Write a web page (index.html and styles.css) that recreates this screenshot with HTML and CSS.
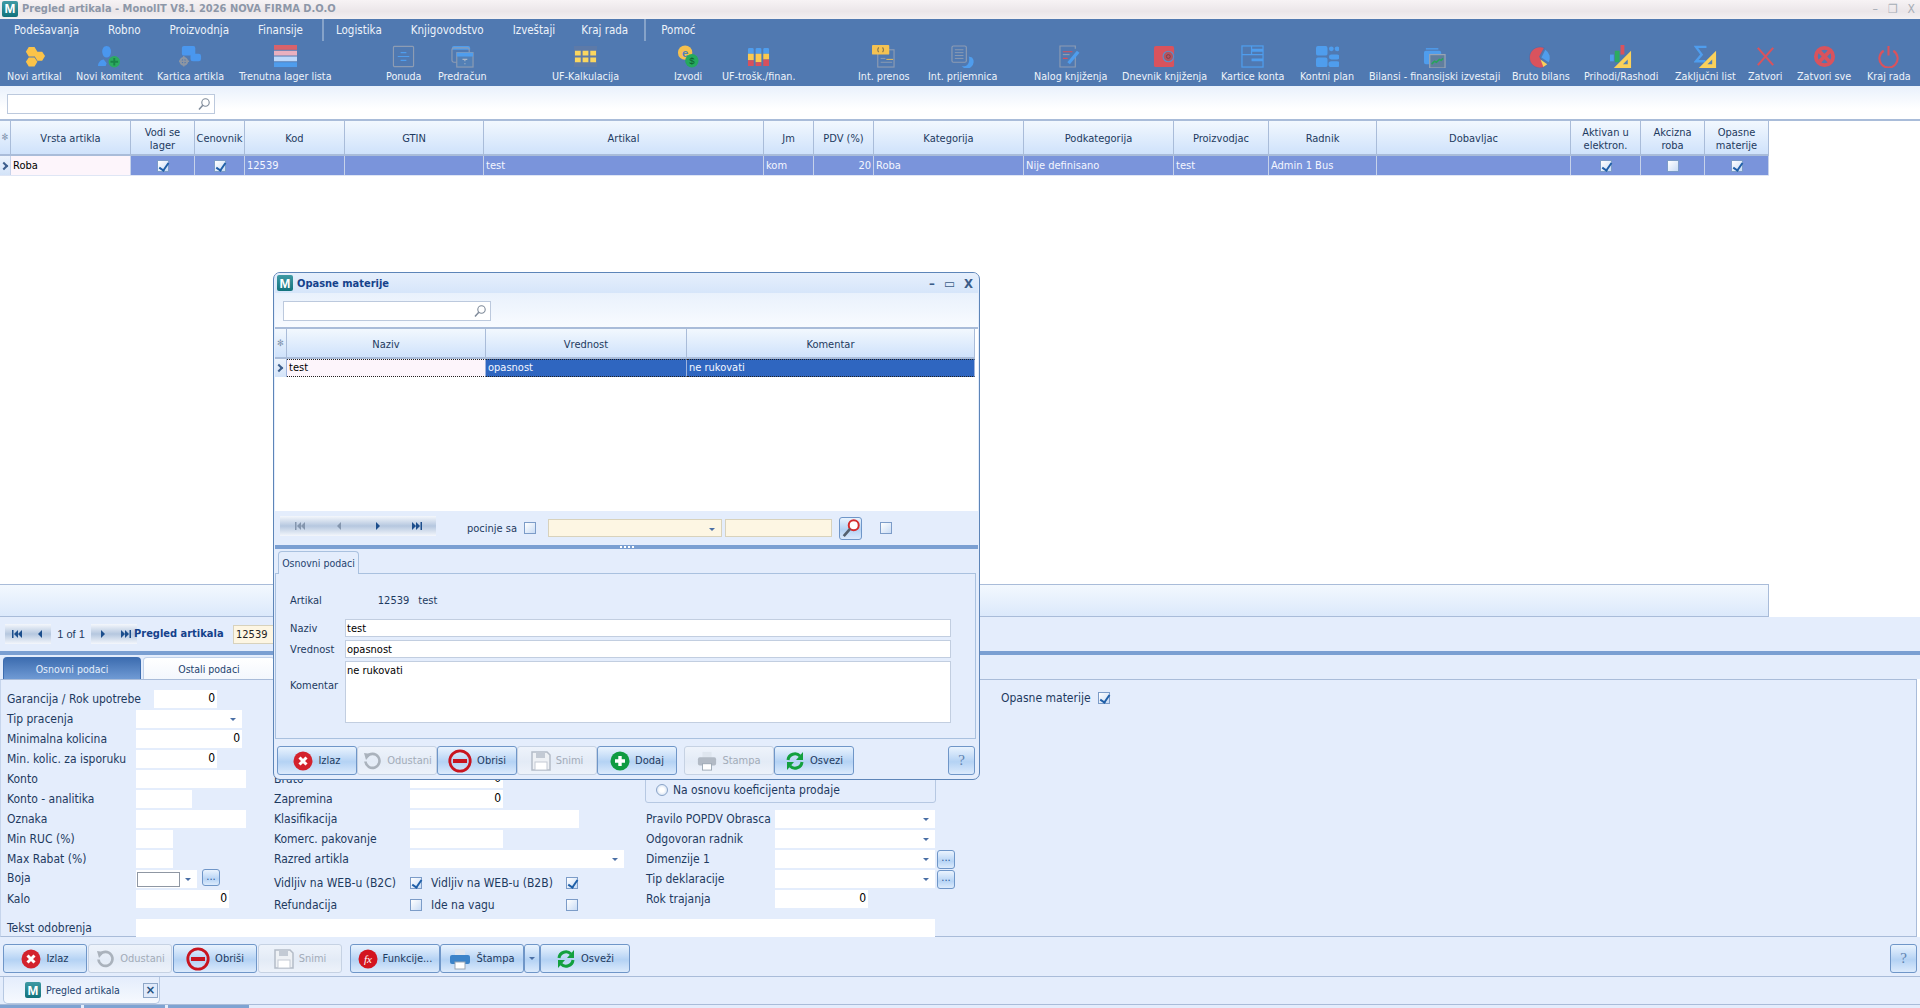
FILE: index.html
```html
<!DOCTYPE html>
<html lang="en">
<head>
  <meta charset="UTF-8" />
  <title>Pregled artikala - MonolIT</title>
  <link rel="stylesheet" href="styles.css">
</head>
<body>

<!-- Icon sprite -->
<svg class="sprite" width="0" height="0">
  <symbol id="i-hex" viewBox="0 0 24 24">
    <path fill="#fbc349" d="M6 2h6l3 5-3 5H6L3 7z M15 7h5l3 4.500-3 5h-5l-3-5z M6 13h6l3 4.500-3 5H6l-3-5z"/>
  </symbol>
  <symbol id="i-person" viewBox="0 0 24 24">
    <path fill="#4a97ee" d="M9 1c3 0 5 3 4.500 7-.4 3-2 5-4.500 5S5 11 4.500 8C4 4 6 1 9 1z M0 22c0-4 3-7 6-7l3 4-1 3z"/>
    <circle cx="17" cy="17.500" r="6" fill="#2cab60"/>
    <path stroke="#1a8548" stroke-width="2" d="M17 13.500v8M13 17.500h8"/>
  </symbol>
  <symbol id="i-chat" viewBox="0 0 24 24">
    <rect x="3" y="1" width="14" height="10" rx="2" fill="#4a97ee"/>
    <rect x="12" y="9" width="11" height="8" rx="2.500" fill="#4a97ee"/>
    <circle cx="5" cy="17" r="3.500" fill="none" stroke="#8d96a3" stroke-width="2.200"/>
    <path stroke="#8d96a3" stroke-width="1.500" d="M5 11.500v11M-.5 17h11"/>
  </symbol>
  <symbol id="i-stripes" viewBox="0 0 24 24">
    <rect y="0" width="24" height="5" fill="#d8626b"/>
    <rect y="6" width="24" height="5" fill="#e9b0bf"/>
    <rect y="12" width="24" height="5" fill="#bdd8fa"/>
    <rect y="18" width="24" height="5" fill="#4f9ded"/>
  </symbol>
  <symbol id="i-doc" viewBox="0 0 24 24">
    <rect x="1.500" y="1.500" width="21" height="21" rx="1" fill="none" stroke="#8d9cb3" stroke-width="1.200"/>
    <path stroke="#4f9ded" stroke-width="1.300" d="M9 8h6M6 12h12M9 16h6"/>
  </symbol>
  <symbol id="i-wins" viewBox="0 0 24 24">
    <path fill="#4f9ded" d="M1 3a2 2 0 0 1 2-2h15a2 2 0 0 1 2 2v2H1z"/>
    <rect x="1" y="3" width="18" height="15" rx="2" fill="none" stroke="#8d9cb3" stroke-width="1.200"/>
    <rect x="6" y="8" width="17" height="15" fill="#5380b6" stroke="#8d9cb3" stroke-width="1.200"/>
    <rect x="6" y="8" width="17" height="4" fill="#4f9ded"/>
    <path stroke="#aab6c8" stroke-width="1.200" d="M12 15h5M14.500 15v2M14.500 19v1"/>
  </symbol>
  <symbol id="i-blocks" viewBox="0 0 24 24">
    <rect x="0" y="1" width="24" height="22" fill="#5d7aa8"/>
    <path fill="#fbd65f" d="M1 6h6v5H1zM9 6h6v5H9zM17 6h6v5h-6zM1 13h6v5H1zM9 13h6v5H9zM17 13h6v5h-6z"/>
  </symbol>
  <symbol id="i-coins" viewBox="0 0 24 24">
    <circle cx="8.500" cy="8" r="7.500" fill="#f5c04e"/>
    <text x="8.500" y="12" font-size="12" font-weight="700" text-anchor="middle" fill="#5380b6" font-family="Liberation Sans">e</text>
    <circle cx="15.500" cy="16.500" r="7" fill="#25a95e"/>
    <text x="15.500" y="20" font-size="10" text-anchor="middle" fill="#0d5c2f" font-family="Liberation Sans">$</text>
  </symbol>
  <symbol id="i-cols" viewBox="0 0 24 24">
    <path fill="#4f9ded" d="M1 4l1-1h4l1 1v5H1zM9 4l1-1h4l1 1v5H9zM17 4l1-1h4l1 1v5h-6z"/>
    <path fill="#fbc94f" d="M1 9h6v7H1zM9 9h6v9H9zM17 9h6v6h-6z"/>
    <path fill="#d8505c" d="M1 16h6v6H1zM9 18h6v4H9zM17 15h6v7h-6z"/>
  </symbol>
  <symbol id="i-transfer" viewBox="0 0 24 24">
    <rect x="6" y="5" width="17" height="18" fill="none" stroke="#8d9cb3" stroke-width="1.200"/>
    <rect x="0" y="0" width="18" height="10" rx="1" fill="#f4c252"/>
    <path stroke="#8a7a50" stroke-width="1.200" fill="none" d="M7 2.500Q5 5 7 7.500M11 2.500Q13 5 11 7.500"/>
    <path stroke="#8d9cb3" d="M9 14h5M9 18h12"/>
    <path stroke="#f4c252" d="M15 15h7"/>
  </symbol>
  <symbol id="i-receipt" viewBox="0 0 24 24">
    <rect x="1" y="1" width="15" height="17" rx="1.500" fill="none" stroke="#8d9cb3" stroke-width="1.200"/>
    <path stroke="#8d9cb3" d="M4 5h9M4 8h9M4 11h9M4 14h9"/>
    <path fill="#4f9ded" d="M22 13a7 7 0 0 1-11 9c4 1 8-1 8-7 0-1 0-2-.5-3z"/>
  </symbol>
  <symbol id="i-journal" viewBox="0 0 24 24">
    <path fill="none" stroke="#8d9cb3" stroke-width="1.200" d="M17 9v14H1V1h16v3"/>
    <path stroke="#d8505c" stroke-width="1.200" d="M4 7h10M4 14h5"/>
    <path stroke="#8d9cb3" stroke-width="1.200" d="M4 10h7"/>
    <path stroke="#4f9ded" stroke-width="3.500" d="M10 19L20 7"/>
  </symbol>
  <symbol id="i-wallet" viewBox="0 0 24 24">
    <path fill="#d9535d" d="M3 1h17a2 2 0 0 1 2 2v18a2 2 0 0 1-2 2H3a2 2 0 0 1-2-2V3a2 2 0 0 1 2-2z"/>
    <circle cx="16" cy="12" r="5.500" fill="#b4545f" stroke="#5a90cc" stroke-width="1.200"/>
    <circle cx="16" cy="12" r="2" fill="none" stroke="#7d3c45"/>
  </symbol>
  <symbol id="i-cards" viewBox="0 0 24 24">
    <rect x="1" y="1" width="22" height="22" fill="none" stroke="#4f9ded" stroke-width="1.300"/>
    <path fill="#4f9ded" d="M11 4h12v3H11zM11 14h12v3H11z"/>
    <path stroke="#4f9ded" stroke-width="1.300" d="M1 10h22M11 1v9"/>
  </symbol>
  <symbol id="i-plan" viewBox="0 0 24 24">
    <path fill="#4f9ded" d="M2 1h8a2 2 0 0 1 2 2v6a2 2 0 0 1-2 2H2a2 2 0 0 1-2-2V3a2 2 0 0 1 2-2z M2 13h8a2 2 0 0 1 2 2v6a2 2 0 0 1-2 2H2a2 2 0 0 1-2-2v-6a2 2 0 0 1 2-2z M16 10h6a2 2 0 0 1 0 5h-6a2 2 0 0 1 0-5z M16 17h6a2 2 0 0 1 0 6h-6a2 2 0 0 1 0-6z"/>
    <circle cx="16" cy="4" r="2.500" fill="#4f9ded"/>
    <circle cx="22" cy="4" r="2.500" fill="#4f9ded"/>
  </symbol>
  <symbol id="i-balance" viewBox="0 0 24 24">
    <path fill="none" stroke="#4f9ded" stroke-width="1.500" d="M3 4h13"/>
    <path fill="#4f9ded" d="M1 8a2 2 0 0 1 2-2h14a2 2 0 0 1 2 2v2H7v10H3a2 2 0 0 1-2-2z"/>
    <rect x="7" y="10" width="16" height="14" fill="#607e9e" stroke="#98a4b4" stroke-width="1.300"/>
    <path fill="none" stroke="#28a45c" stroke-width="1.600" d="M9 20l3-3 2 1 3-3 2 1 2-2"/>
  </symbol>
  <symbol id="i-pie" viewBox="0 0 24 24">
    <path fill="#d9535d" stroke="#3d6fb0" stroke-width=".600" d="M12 2a11 11 0 1 0 4 21l-5-11L16 3a11 11 0 0 0-4-1z"/>
    <path fill="#4f9ded" d="M17 5a10 10 0 0 1 3.500 13L13 13z"/>
    <path fill="#fbd15a" d="M12 15l7 5-4 3z"/>
  </symbol>
  <symbol id="i-profit" viewBox="0 0 24 24">
    <rect x="0" y="10" width="4" height="7" fill="#4f9ded"/>
    <rect x="5" y="6" width="5" height="12" fill="#2cab60"/>
    <rect x="11" y="0" width="4" height="10" fill="#d9535d"/>
    <path fill="#fbd15a" d="M22 6v18H4z"/>
    <path fill="#5380b6" d="M18.500 15v5h-5z"/>
  </symbol>
  <symbol id="i-sigma" viewBox="0 0 24 24">
    <path fill="none" stroke="#4f9ded" stroke-width="2.500" d="M13 2H2l6 8-6 7h10"/>
    <path fill="#fbd15a" d="M23 6v18H5z"/>
    <path fill="#5380b6" d="M19 15v5h-5z"/>
  </symbol>
  <symbol id="i-x" viewBox="0 0 24 24">
    <path stroke="#d9535d" stroke-width="2.200" d="M4 3l16 18M20 3L4 21"/>
  </symbol>
  <symbol id="i-xall" viewBox="0 0 24 24">
    <circle cx="12" cy="12" r="9" fill="none" stroke="#d9535d" stroke-width="4"/>
    <path stroke="#d9535d" stroke-width="4" d="M7 7l10 10M17 7L7 17"/>
  </symbol>
  <symbol id="i-power" viewBox="0 0 24 24">
    <path fill="none" stroke="#d9535d" stroke-width="2.200" d="M7 6a9.500 9.500 0 1 0 10 0M12 1v10"/>
  </symbol>
  <symbol id="i-izlaz" viewBox="0 0 20 20">
    <circle cx="10" cy="10" r="9.500" fill="#d3222d"/>
    <path stroke="#fff" stroke-width="3" d="M6.500 6.500l7 7M13.500 6.500l-7 7"/>
  </symbol>
  <symbol id="i-undo" viewBox="0 0 20 20">
    <path fill="none" stroke="#aab2bc" stroke-width="2.600" d="M5 5.500a7 7 0 1 1-1.500 5"/>
    <path fill="#aab2bc" d="M2 2l7 1-5 6z"/>
  </symbol>
  <symbol id="i-minus" viewBox="0 0 24 24">
    <circle cx="12" cy="12" r="10.200" fill="none" stroke="#c8141f" stroke-width="2.800"/>
    <rect x="5" y="10" width="14" height="4" fill="#c8141f"/>
  </symbol>
  <symbol id="i-save" viewBox="0 0 20 20">
    <path fill="#eef1f5" stroke="#b4bcc7" stroke-width="1.500" d="M1 1h15l3 3v15H1z"/>
    <rect x="5" y="1" width="9" height="6" fill="#c3cad4"/>
    <rect x="4" y="11" width="12" height="8" fill="#fff" stroke="#c3cad4"/>
  </symbol>
  <symbol id="i-plus" viewBox="0 0 20 20">
    <circle cx="10" cy="10" r="9.500" fill="#0f9b41"/>
    <path stroke="#fff" stroke-width="3.400" d="M10 5v10M5 10h10"/>
  </symbol>
  <symbol id="i-print" viewBox="0 0 22 22">
    <rect x="6" y="1" width="10" height="7" fill="#dfe6ef"/>
    <rect x="1" y="7" width="20" height="9" rx="2" fill="currentColor"/>
    <rect x="6" y="14" width="10" height="7" fill="#fff" stroke="#9aa6b3"/>
  </symbol>
  <symbol id="i-refresh" viewBox="0 0 20 20">
    <path fill="none" stroke="#12a03e" stroke-width="3" d="M3 9a7 7 0 0 1 12-4M17 11a7 7 0 0 1-12 4"/>
    <path fill="#12a03e" d="M18 1v8h-7zM2 19v-8h7z"/>
  </symbol>
  <symbol id="i-fx" viewBox="0 0 20 20">
    <circle cx="10" cy="10" r="9.500" fill="#d3141f"/>
    <text x="10" y="14" font-size="11" font-style="italic" text-anchor="middle" fill="#fff" font-family="Liberation Serif">fx</text>
  </symbol>
  <symbol id="i-zoom" viewBox="0 0 14 14">
    <circle cx="8.500" cy="5.500" r="3.700" fill="none" stroke="#7e8a99" stroke-width="1.100"/>
    <path stroke="#7e8a99" stroke-width="1.500" d="M5.800 8.200L2 12.500"/>
  </symbol>
  <symbol id="i-first" viewBox="0 0 12 10"><path fill="currentColor" d="M1 1h1.500v8H1zM7 1v8L3 5zM11 1v8L7 5z"/></symbol>
  <symbol id="i-prev" viewBox="0 0 12 10"><path fill="currentColor" d="M8 1v8L4 5z"/></symbol>
  <symbol id="i-next" viewBox="0 0 12 10"><path fill="currentColor" d="M4 1v8l4-4z"/></symbol>
  <symbol id="i-last" viewBox="0 0 12 10"><path fill="currentColor" d="M1 1v8l4-4zM5 1v8l4-4zM9.500 1H11v8H9.500z"/></symbol>
</svg>

<div class="app">

  <div class="titlebar">
    <span class="logo">M</span>
    <span class="title-text">Pregled artikala - MonolIT V8.1 2026 NOVA FIRMA D.O.O</span>
    <span class="win-ctrl"><i>–</i><i>❐</i><i>X</i></span>
  </div>

  <div class="menubar">
    <span class="menu-item">Podešavanja</span>
    <span class="menu-item">Robno</span>
    <span class="menu-item">Proizvodnja</span>
    <span class="menu-item">Finansije</span>
    <span class="menu-sep"></span>
    <span class="menu-item">Logistika</span>
    <span class="menu-item">Knjigovodstvo</span>
    <span class="menu-item tight">Izveštaji</span>
    <span class="menu-item tight">Kraj rada</span>
    <span class="menu-sep"></span>
    <span class="menu-item">Pomoć</span>
  </div>

  <div class="toolbar">
    <div class="tool"><svg class="tool-ico"><use href="#i-hex"/></svg><span>Novi artikal</span></div>
    <div class="tool"><svg class="tool-ico"><use href="#i-person"/></svg><span>Novi komitent</span></div>
    <div class="tool"><svg class="tool-ico"><use href="#i-chat"/></svg><span>Kartica artikla</span></div>
    <div class="tool"><svg class="tool-ico"><use href="#i-stripes"/></svg><span>Trenutna lager lista</span></div>
    <div class="tool"><svg class="tool-ico"><use href="#i-doc"/></svg><span>Ponuda</span></div>
    <div class="tool"><svg class="tool-ico"><use href="#i-wins"/></svg><span>Predračun</span></div>
    <div class="tool"><svg class="tool-ico"><use href="#i-blocks"/></svg><span>UF-Kalkulacija</span></div>
    <div class="tool"><svg class="tool-ico"><use href="#i-coins"/></svg><span>Izvodi</span></div>
    <div class="tool"><svg class="tool-ico"><use href="#i-cols"/></svg><span>UF-trošk./finan.</span></div>
    <div class="tool"><svg class="tool-ico"><use href="#i-transfer"/></svg><span>Int. prenos</span></div>
    <div class="tool"><svg class="tool-ico"><use href="#i-receipt"/></svg><span>Int. prijemnica</span></div>
    <div class="tool"><svg class="tool-ico"><use href="#i-journal"/></svg><span>Nalog knjiženja</span></div>
    <div class="tool"><svg class="tool-ico"><use href="#i-wallet"/></svg><span>Dnevnik knjiženja</span></div>
    <div class="tool"><svg class="tool-ico"><use href="#i-cards"/></svg><span>Kartice konta</span></div>
    <div class="tool"><svg class="tool-ico"><use href="#i-plan"/></svg><span>Kontni plan</span></div>
    <div class="tool"><svg class="tool-ico"><use href="#i-balance"/></svg><span>Bilansi - finansijski izvestaji</span></div>
    <div class="tool"><svg class="tool-ico"><use href="#i-pie"/></svg><span>Bruto bilans</span></div>
    <div class="tool"><svg class="tool-ico"><use href="#i-profit"/></svg><span>Prihodi/Rashodi</span></div>
    <div class="tool"><svg class="tool-ico"><use href="#i-sigma"/></svg><span>Zaključni list</span></div>
    <div class="tool"><svg class="tool-ico"><use href="#i-x"/></svg><span>Zatvori</span></div>
    <div class="tool"><svg class="tool-ico"><use href="#i-xall"/></svg><span>Zatvori sve</span></div>
    <div class="tool"><svg class="tool-ico"><use href="#i-power"/></svg><span>Kraj rada</span></div>
  </div>

  <div class="searchbar">
    <div class="searchbox"><svg class="zoom-ico"><use href="#i-zoom"/></svg></div>
  </div>

  <!-- Article list -->
  <div class="grid-head art-cols">
    <div class="hcell star">✻</div>
    <div class="hcell">Vrsta artikla</div>
    <div class="hcell">Vodi se lager</div>
    <div class="hcell">Cenovnik</div>
    <div class="hcell">Kod</div>
    <div class="hcell">GTIN</div>
    <div class="hcell">Artikal</div>
    <div class="hcell">Jm</div>
    <div class="hcell">PDV (%)</div>
    <div class="hcell">Kategorija</div>
    <div class="hcell">Podkategorija</div>
    <div class="hcell">Proizvodjac</div>
    <div class="hcell">Radnik</div>
    <div class="hcell">Dobavljac</div>
    <div class="hcell">Aktivan u elektron.</div>
    <div class="hcell">Akcizna roba</div>
    <div class="hcell">Opasne materije</div>
  </div>
  <div class="grid-row art-cols art-row">
    <div class="cell marker"><span class="chev"></span></div>
    <div class="cell first">Roba</div>
    <div class="cell mid"><span class="chk on"></span></div>
    <div class="cell mid"><span class="chk on"></span></div>
    <div class="cell">12539</div>
    <div class="cell"></div>
    <div class="cell">test</div>
    <div class="cell">kom</div>
    <div class="cell right">20</div>
    <div class="cell">Roba</div>
    <div class="cell">Nije definisano</div>
    <div class="cell">test</div>
    <div class="cell">Admin 1 Bus</div>
    <div class="cell"></div>
    <div class="cell mid"><span class="chk on"></span></div>
    <div class="cell mid"><span class="chk"></span></div>
    <div class="cell mid"><span class="chk on"></span></div>
  </div>
  <div class="grid-space"></div>
  <div class="summary"></div>

  <!-- Record navigator -->
  <div class="navrow">
    <div class="navband">
      <svg class="nav-ico"><use href="#i-first"/></svg>
      <svg class="nav-ico"><use href="#i-prev"/></svg>
    </div>
    <span class="nav-count">1 of 1</span>
    <div class="navband">
      <svg class="nav-ico"><use href="#i-next"/></svg>
      <svg class="nav-ico"><use href="#i-last"/></svg>
    </div>
    <b class="nav-title">Pregled artikala</b>
    <span class="nav-code">12539</span>
  </div>
  <div class="splitter"></div>

  <div class="tabs">
    <span class="tab tab-on">Osnovni podaci</span>
    <span class="tab tab-next">Ostali podaci</span>
  </div>

  <div class="panel">
    <div class="form-cols">
      <div class="col-a">
        <div class="row"><span class="lbl lbl-wide">Garancija / Rok upotrebe</span><span class="fld num w63">0</span></div>
        <div class="row"><span class="lbl">Tip pracenja</span><span class="fld drop w106"><i class="arrow"></i></span></div>
        <div class="row"><span class="lbl">Minimalna kolicina</span><span class="fld num w106">0</span></div>
        <div class="row"><span class="lbl">Min. kolic. za isporuku</span><span class="fld num w81">0</span></div>
        <div class="row"><span class="lbl">Konto</span><span class="fld w110"></span></div>
        <div class="row"><span class="lbl">Konto - analitika</span><span class="fld w56"></span></div>
        <div class="row"><span class="lbl">Oznaka</span><span class="fld w110"></span></div>
        <div class="row"><span class="lbl">Min RUC (%)</span><span class="fld w37"></span></div>
        <div class="row"><span class="lbl">Max Rabat (%)</span><span class="fld w37"></span></div>
        <div class="row"><span class="lbl lbl-up">Boja</span><span class="fld drop w61"><i class="swatch"></i><i class="arrow"></i></span><span class="dots">...</span></div>
        <div class="row"><span class="lbl">Kalo</span><span class="fld num w93">0</span></div>
      </div>
      <div class="col-b">
        <div class="row"><span class="lbl lbl-b">Bruto</span><span class="fld num w93">0</span></div>
        <div class="row"><span class="lbl lbl-b">Zapremina</span><span class="fld num w93">0</span></div>
        <div class="row"><span class="lbl lbl-b">Klasifikacija</span><span class="fld w169"></span></div>
        <div class="row"><span class="lbl lbl-b">Komerc. pakovanje</span><span class="fld w93"></span></div>
        <div class="row"><span class="lbl lbl-b">Razred artikla</span><span class="fld drop w214"><i class="arrow"></i></span></div>
        <div class="row row-chk row-web"><span class="lbl lbl-b">Vidljiv na WEB-u (B2C)</span><span class="chk on"></span><span class="lbl lbl-b2">Vidljiv na WEB-u (B2B)</span><span class="chk on"></span></div>
        <div class="row row-chk"><span class="lbl lbl-b">Refundacija</span><span class="chk"></span><span class="lbl lbl-b2">Ide na vagu</span><span class="chk"></span></div>
      </div>
      <div class="col-c">
        <div class="groupbox"><span class="radio"></span><span class="lbl">Na osnovu koeficijenta prodaje</span></div>
        <div class="row"><span class="lbl lbl-c">Pravilo POPDV Obrasca</span><span class="fld drop w160"><i class="arrow"></i></span></div>
        <div class="row"><span class="lbl lbl-c">Odgovoran radnik</span><span class="fld drop w160"><i class="arrow"></i></span></div>
        <div class="row"><span class="lbl lbl-c">Dimenzije 1</span><span class="fld drop w160"><i class="arrow"></i></span><span class="dots dots-c">...</span></div>
        <div class="row"><span class="lbl lbl-c">Tip deklaracije</span><span class="fld drop w160"><i class="arrow"></i></span><span class="dots dots-c">...</span></div>
        <div class="row"><span class="lbl lbl-c">Rok trajanja</span><span class="fld num w93">0</span></div>
      </div>
      <div class="col-d">
        <span class="lbl">Opasne materije</span><span class="chk on"></span>
      </div>
    </div>
    <div class="wide-row"><span class="lbl">Tekst odobrenja</span><span class="fld w-wide"></span></div>
  </div>

  <div class="actionbar">
    <button class="btn b84"><svg class="btn-ico"><use href="#i-izlaz"/></svg>Izlaz</button>
    <button class="btn b84 off"><svg class="btn-ico"><use href="#i-undo"/></svg>Odustani</button>
    <button class="btn b84"><svg class="btn-ico big"><use href="#i-minus"/></svg>Obriši</button>
    <button class="btn b84 off"><svg class="btn-ico"><use href="#i-save"/></svg>Snimi</button>
    <button class="btn b90 gap-l"><svg class="btn-ico"><use href="#i-fx"/></svg>Funkcije...</button>
    <button class="btn b84 print joined"><svg class="btn-ico"><use href="#i-print"/></svg>Štampa</button>
    <button class="btn b16 joined"><i class="arrow"></i></button>
    <button class="btn b90 joined"><svg class="btn-ico"><use href="#i-refresh"/></svg>Osveži</button>
    <button class="btn help push">?</button>
  </div>

  <div class="tabstrip">
    <div class="doc-tab">
      <span class="logo">M</span>
      <span class="doc-name">Pregled artikala</span>
      <span class="doc-close">×</span>
    </div>
  </div>
  <div class="task-edge"></div>

  <!-- Opasne materije window -->
  <div class="dialog">
    <div class="dlg-title">
      <span class="logo">M</span>
      <span class="dlg-name">Opasne materije</span>
      <span class="dlg-ctrl"><i>–</i><i>▭</i><i>X</i></span>
    </div>
    <div class="dlg-search">
      <div class="searchbox"><svg class="zoom-ico"><use href="#i-zoom"/></svg></div>
    </div>
    <div class="dlg-list">
      <div class="grid-head dlg-cols dlg-head">
        <div class="hcell star">✻</div>
        <div class="hcell">Naziv</div>
        <div class="hcell">Vrednost</div>
        <div class="hcell">Komentar</div>
      </div>
      <div class="grid-row dlg-cols dlg-row">
        <div class="cell marker"><span class="chev"></span></div>
        <div class="cell first dotted">test</div>
        <div class="cell dotted">opasnost</div>
        <div class="cell dotted">ne rukovati</div>
      </div>
    </div>
    <div class="dlg-nav">
      <div class="navband band-long">
        <svg class="nav-ico dim"><use href="#i-first"/></svg>
        <svg class="nav-ico dim"><use href="#i-prev"/></svg>
        <svg class="nav-ico"><use href="#i-next"/></svg>
        <svg class="nav-ico"><use href="#i-last"/></svg>
      </div>
      <span class="lbl pocinje">pocinje sa</span>
      <span class="chk"></span>
      <span class="fld yellow drop w174"><i class="arrow"></i></span>
      <span class="fld yellow w107"></span>
      <button class="btn find"><svg class="find-ico" viewBox="0 0 22 22"><circle cx="14" cy="8" r="5.500" fill="#fff" stroke="#d42b2b" stroke-width="2.200"/><path stroke="#53606e" stroke-width="3" d="M10 12l-7 8"/></svg></button>
      <span class="chk chk-last"></span>
    </div>
    <div class="dlg-split"><i class="grip"></i></div>
    <div class="dlg-tabs"><span class="dlg-tab">Osnovni podaci</span></div>
    <div class="dlg-panel">
      <div class="dlg-info"><span>Artikal</span><span class="info-code">12539</span><span>test</span></div>
      <div class="dlg-form">
        <span class="lbl">Naziv</span><span class="fld dlg-fld">test</span>
        <span class="lbl">Vrednost</span><span class="fld dlg-fld">opasnost</span>
        <span class="lbl lbl-memo">Komentar</span><span class="fld dlg-fld memo">ne rukovati</span>
      </div>
    </div>
    <div class="dlg-actions">
      <button class="btn b79"><svg class="btn-ico"><use href="#i-izlaz"/></svg>Izlaz</button>
      <button class="btn b79 off"><svg class="btn-ico"><use href="#i-undo"/></svg>Odustani</button>
      <button class="btn b79"><svg class="btn-ico big"><use href="#i-minus"/></svg>Obrisi</button>
      <button class="btn b79 off"><svg class="btn-ico"><use href="#i-save"/></svg>Snimi</button>
      <button class="btn b79"><svg class="btn-ico"><use href="#i-plus"/></svg>Dodaj</button>
      <button class="btn b90 off gap-s"><svg class="btn-ico"><use href="#i-print"/></svg>Stampa</button>
      <button class="btn b79"><svg class="btn-ico"><use href="#i-refresh"/></svg>Osvezi</button>
      <button class="btn help push">?</button>
    </div>
  </div>

</div>

</body>
</html>
```

FILE: styles.css
```css
* {
  box-sizing: border-box;
}

html, body {
  margin: 0;
  height: 100%;
  overflow: hidden;
}

body {
  font-family: "DejaVu Sans Condensed", "DejaVu Sans", sans-serif;
  font-size: 11px;
  color: #1d3a60;
  background: #fff;
}

.sprite {
  position: absolute;
}

.app {
  position: relative;
  width: 1920px;
  height: 1008px;
  display: flex;
  flex-direction: column;
  overflow: hidden;
}

.logo {
  width: 16px;
  height: 16px;
  flex: none;
  display: flex;
  align-items: center;
  justify-content: center;
  background: linear-gradient(#3f9aa4, #12727c);
  border-radius: 2px;
  color: #fff;
  font: bold 13px "Liberation Sans", sans-serif;
}

/* Title bar */
.titlebar {
  height: 19px;
  flex: none;
  display: flex;
  align-items: center;
  padding: 0 5px 2px 2px;
  background: linear-gradient(#f7f3f5, #ebe6e9 60%, #f3f0f2);
}

.title-text {
  margin-left: 4px;
  font-weight: bold;
  font-size: 11px;
  color: #8d97a8;
}

.win-ctrl {
  margin-left: auto;
  display: flex;
  gap: 10px;
  color: #a7adb6;
  font-size: 12px;
}

.win-ctrl i {
  font-style: normal;
}

/* Menu */
.menubar {
  height: 24px;
  flex: none;
  display: flex;
  background: #5079b1;
  color: #eef3fa;
  padding-left: 14px;
  font-size: 11.500px;
}

.menu-item {
  line-height: 23px;
  margin-right: 29px;
}

.menu-item.tight {
  margin-right: 26px;
}

.menu-sep {
  width: 2px;
  height: 22px;
  background: #86a3c9;
  margin: 0 12px 0 -10px;
}

.tight + .menu-sep {
  margin-right: 15px;
}

.toolbar {
  height: 43px;
  flex: none;
  display: grid;
  grid-template-columns: 69px 81px 82px 147px 52px 114px 122px 48px 136px 70px 106px 88px 99px 79px 69px 143px 72px 91px 73px 49px 70px 45px;
  justify-items: start;
  padding-left: 7px;
  background: #5079b1;
  color: #eef3fa;
  font-size: 10.700px;
}

.tool {
  display: flex;
  flex-direction: column;
  align-items: center;
  white-space: nowrap;
}

.tool-ico {
  width: 23px;
  height: 23px;
  margin-top: 2px;
}

.tool span {
  line-height: 14px;
  margin-top: 2px;
}

/* Search */
.searchbar {
  height: 35px;
  flex: none;
  padding: 8px 0 0 7px;
  background: linear-gradient(#e9f1fc, #fff 70%);
  border-bottom: 2px solid #a9bcd9;
}

.searchbox {
  width: 208px;
  height: 20px;
  display: flex;
  align-items: center;
  justify-content: flex-end;
  padding-right: 3px;
  background: #fff;
  border: 1px solid #bcc9dd;
}

.zoom-ico {
  width: 14px;
  height: 14px;
}

/* Grids */
.art-cols {
  display: grid;
  grid-template-columns: 11px 120px 64px 50px 100px 139px 280px 50px 60px 150px 150px 95px 108px 194px 70px 64px 64px;
  width: 1769px;
}

.dlg-cols {
  display: grid;
  grid-template-columns: 12px 199px 201px 288px;
}

.grid-head {
  height: 35px;
  flex: none;
  background: linear-gradient(#f2f8fe, #cfe2fb);
  border-bottom: 2px solid #a9bcd9;
}

.hcell {
  display: flex;
  align-items: center;
  justify-content: center;
  text-align: center;
  line-height: 13px;
  border-right: 1px solid #a9bcd9;
  padding: 2px 3px 0;
}

.star {
  color: #7f93ad;
  padding: 0;
  font-size: 9px;
}

.grid-row {
  height: 20px;
  flex: none;
}

.art-row {
  background: #7a94db;
  color: #f4f6ff;
  border-bottom: 1px solid #dfe6f5;
}

.cell {
  border-right: 1px solid #c6d2ea;
  padding: 0 2px;
  line-height: 20px;
  overflow: hidden;
  white-space: nowrap;
}

.cell.right {
  text-align: right;
}

.cell.mid {
  display: flex;
  align-items: center;
  justify-content: center;
}

.cell.first {
  background: #fdf5fb;
  color: #000;
}

.cell.marker {
  background: linear-gradient(#edf4fd, #d3e3f8);
  padding: 0;
  display: flex;
  align-items: center;
  justify-content: center;
}

.chev {
  width: 6px;
  height: 6px;
  border-top: 2px solid #3d5f8d;
  border-right: 2px solid #3d5f8d;
  transform: rotate(45deg);
  margin-left: -3px;
}

.grid-space {
  flex: 1;
  background: #fff;
}

.summary {
  height: 33px;
  width: 1769px;
  flex: none;
  background: linear-gradient(#f3f8fe, #dbe9fb);
  border: 1px solid #a9bcd9;
  border-left: none;
}

/* Checkboxes */
.chk {
  width: 12px;
  height: 12px;
  flex: none;
  position: relative;
  display: inline-block;
  border: 1px solid #7c9cc8;
  background: linear-gradient(135deg, #fff, #c9dcf5);
}

.chk.on::after {
  content: "";
  position: absolute;
  left: 3px;
  top: 0;
  width: 4px;
  height: 8px;
  border-right: 2px solid #1f5fa8;
  border-bottom: 2px solid #1f5fa8;
  transform: rotate(35deg);
}

/* Navigator */
.navrow {
  height: 34px;
  flex: none;
  display: flex;
  align-items: center;
  padding-left: 5px;
  background: #e4edfc;
}

.navband {
  width: 46px;
  height: 20px;
  display: flex;
  align-items: center;
  justify-content: space-around;
  background: linear-gradient(#f4f7fc, #b5c7df 50%, #f4f7fc);
  color: #1c4e8c;
}

.nav-ico {
  width: 12px;
  height: 10px;
}

.nav-ico.dim {
  color: #8496ae;
}

.nav-count {
  width: 40px;
  text-align: center;
  font-family: "Liberation Sans", sans-serif;
}

.nav-title {
  margin: -2px 0 0 -3px;
  color: #15428b;
  font-size: 11px;
  width: 99px;
  white-space: nowrap;
}

.nav-code {
  width: 60px;
  height: 19px;
  line-height: 18px;
  padding-left: 2px;
  background: #fdf6e3;
  border: 1px solid #d8d2bc;
  color: #222;
}

.splitter {
  height: 4px;
  flex: none;
  background: #7a9fd2;
}

/* Tabs */
.tabs {
  height: 24px;
  flex: none;
  display: flex;
  gap: 2px;
  padding: 2px 0 0 3px;
  background: #e4edfc;
  font-size: 10.500px;
}

.tab {
  width: 138px;
  display: flex;
  align-items: center;
  justify-content: center;
  border: 1px solid #c1d2ea;
  border-bottom: none;
  border-radius: 4px 4px 0 0;
  background: linear-gradient(#fff, #f3f7fd);
  color: #24446f;
}

.tab-next {
  width: 132px;
}

.tab-on {
  background: linear-gradient(#3d6db0, #6f9ad4);
  border-color: #3d6db0;
  color: #e4eefb;
}

/* Main form */
.panel {
  height: 258px;
  flex: none;
  margin-right: 3px;
  background: #e4edfc;
  border: 1px solid #a9bcd9;
  border-left-color: #c6d5ec;
}

.form-cols {
  height: 239px;
  display: flex;
  padding-top: 9px;
}

.col-a {
  width: 273px;
  padding-left: 6px;
}

.col-b {
  width: 372px;
  padding-top: 80px;
}

.col-c {
  width: 355px;
}

.col-d {
  display: flex;
  align-items: center;
  gap: 7px;
  height: 18px;
}

.row {
  height: 20px;
  display: flex;
  align-items: center;
  white-space: nowrap;
}

.row-chk {
  height: 24px;
}

.row-web {
  margin-top: 2px;
  margin-bottom: -2px;
}

.lbl {
  font-size: 12px;
  white-space: nowrap;
}

.row > .lbl {
  width: 129px;
}

.row > .lbl-wide {
  width: 147px;
}

.row > .lbl-up {
  margin-top: -3px;
}

.row > .lbl-b {
  width: 136px;
}

.row > .lbl-b2 {
  width: 135px;
  margin-left: 9px;
}

.row > .lbl-c {
  width: 129px;
}

.fld {
  height: 18px;
  line-height: 17px;
  padding: 0 1px;
  background: #fff;
  position: relative;
  color: #000;
  display: block;
}

.fld.num {
  text-align: right;
  font-size: 12px;
  padding-right: 2px;
}

.fld.drop .arrow {
  position: absolute;
  right: 6px;
  top: 8px;
}

.arrow {
  display: inline-block;
  width: 0;
  height: 0;
  border-left: 3px solid transparent;
  border-right: 3px solid transparent;
  border-top: 3px solid #4a6fa5;
}

.swatch {
  position: absolute;
  left: 1px;
  top: 2px;
  width: 43px;
  height: 15px;
  background: #fff;
  border: 1px solid #8f97a3;
}

.w37 { width: 37px; }
.w56 { width: 56px; }
.w61 { width: 61px; }
.w63 { width: 63px; }
.w81 { width: 81px; }
.w93 { width: 93px; }
.w106 { width: 106px; }
.w107 { width: 107px; }
.w110 { width: 110px; }
.w160 { width: 160px; }
.w169 { width: 169px; }
.w174 { width: 174px; }
.w214 { width: 214px; }

.dots {
  width: 18px;
  height: 17px;
  margin: -4px 0 0 5px;
  display: flex;
  justify-content: center;
  border: 1px solid #6f96c8;
  border-radius: 3px;
  background: linear-gradient(#eaf3fe, #b7d4f5 60%, #dcebfc);
  color: #2a5a9a;
  line-height: 13px;
}

.dots-c {
  height: 19px;
  margin: 0 0 0 2px;
}

.groupbox {
  height: 114px;
  margin: 0 0 6px -1px;
  width: 291px;
  display: flex;
  align-items: flex-end;
  gap: 5px;
  padding: 0 0 5px 10px;
  border: 1px solid #b6c8e2;
  border-radius: 3px;
}

.radio {
  width: 12px;
  height: 12px;
  border-radius: 50%;
  border: 1px solid #8aa4c8;
  background: radial-gradient(#fff 30%, #c4d6ee);
  margin-bottom: 1px;
}

.wide-row {
  display: flex;
  align-items: center;
  height: 17px;
  padding-left: 6px;
}

.wide-row .lbl {
  width: 129px;
}

.w-wide {
  width: 799px;
}

/* Buttons */
.actionbar {
  height: 40px;
  flex: none;
  display: flex;
  align-items: flex-start;
  gap: 1px;
  padding: 7px 3px 0 3px;
  background: #e4edfc;
  border-bottom: 1px solid #a9bcd9;
}

.btn {
  height: 29px;
  display: flex;
  align-items: center;
  justify-content: center;
  gap: 5px;
  padding: 0;
  font: 11px "DejaVu Sans Condensed", "DejaVu Sans", sans-serif;
  color: #1d3a60;
  border: 1px solid #6f96c8;
  border-radius: 3px;
  background: linear-gradient(#e9f3fe, #b4d2f4 55%, #dbeafc);
}

.btn.off {
  color: #a2abb8;
  border-color: #c6d2e3;
  background: linear-gradient(#eef3fb, #e3ebf6 55%, #edf2fa);
}

.btn-ico {
  width: 20px;
  height: 20px;
  flex: none;
  color: #b2bac5;
}

.btn-ico.big {
  width: 24px;
  height: 24px;
}

.print .btn-ico {
  width: 22px;
  height: 22px;
  color: #3b83c9;
}

.b79 { width: 80px; }
.b84 { width: 84px; }
.b90 { width: 90px; }
.b16 { width: 16px; }

.gap-l {
  margin-left: 7px;
}

.gap-s {
  margin-left: 7px;
}

.joined {
  margin-left: -1px;
}

.push {
  margin-left: auto;
}

.help {
  width: 27px;
  font: 15px "Liberation Serif", serif;
  color: #5f83b0;
}

/* Bottom tab strip */
.tabstrip {
  height: 28px;
  flex: none;
  padding-left: 3px;
  background: #e4edfc;
  border-bottom: 1px solid #a9bcd9;
  font-size: 10.500px;
}

.doc-tab {
  width: 157px;
  height: 27px;
  display: flex;
  align-items: center;
  padding-left: 21px;
  background: linear-gradient(#e4edfc, #f6f9fe);
  border: 1px solid #b6c8e2;
  border-top: none;
  border-radius: 0 0 5px 5px;
}

.doc-name {
  margin-left: 5px;
  width: 97px;
  color: #24446f;
}

.doc-close {
  width: 15px;
  height: 15px;
  border: 1px solid #8fa7c7;
  background: #e0eafa;
  color: #23507f;
  text-align: center;
  line-height: 12px;
  font-weight: bold;
  font-size: 13px;
}

.task-edge {
  height: 3px;
  flex: none;
  background: repeating-linear-gradient(90deg, #7fa3d2 0 81px, #e4edfc 81px 84px) 0 0 / 250px 3px no-repeat #e4edfc;
}

/* Floating window */
.dialog {
  position: absolute;
  left: 273px;
  top: 272px;
  width: 707px;
  height: 508px;
  display: flex;
  flex-direction: column;
  padding: 0 1px;
  background: #e4edfc;
  border: 1px solid #5d85b8;
  border-radius: 7px;
  overflow: hidden;
}

.dlg-title {
  height: 20px;
  flex: none;
  display: flex;
  align-items: center;
  padding: 0 5px 0 2px;
  background: linear-gradient(#e6effc, #d6e5fa);
}

.dlg-name {
  margin-left: 4px;
  font-weight: bold;
  color: #15428b;
}

.dlg-ctrl {
  margin-left: auto;
  display: flex;
  gap: 9px;
  color: #3b5c88;
  font-size: 13px;
  font-weight: bold;
}

.dlg-ctrl i {
  font-style: normal;
}

.dlg-search {
  height: 36px;
  flex: none;
  padding: 8px 0 0 8px;
  background: linear-gradient(#e9f1fc, #f8fbff);
  border-bottom: 2px solid #a9bcd9;
}

.dlg-list {
  height: 182px;
  flex: none;
  background: #fff;
}

.dlg-head {
  height: 30px;
  width: 700px;
}

.dlg-row {
  height: 18px;
  width: 700px;
  background: #2f66c0;
  color: #f4f7ff;
}

.dlg-row .cell {
  line-height: 16px;
  border-right-color: #9fb4dd;
}

.dotted {
  border-top: 1px dotted #222;
  border-bottom: 1px dotted #222;
}

.dlg-nav {
  height: 34px;
  flex: none;
  display: flex;
  align-items: center;
  padding-left: 5px;
}

.dlg-nav .lbl,
.dlg-form .lbl {
  font-size: 11px;
}

.lbl-memo {
  margin-bottom: 14px;
}

.band-long {
  width: 156px;
  margin-top: -4px;
}

.pocinje {
  margin-left: 31px;
  margin-right: 7px;
}

.fld.yellow {
  background: #fdf6e3;
  border: 1px solid #d8d2bc;
  margin-left: 3px;
}

.dlg-nav .w174 {
  margin-left: 12px;
}

.find {
  width: 23px;
  height: 23px;
  margin-left: 7px;
}

.find-ico {
  width: 20px;
  height: 20px;
}

.chk-last {
  margin-left: 18px;
}

.dlg-split {
  height: 4px;
  flex: none;
  display: flex;
  justify-content: center;
  background: #7a9fd2;
}

.grip {
  width: 14px;
  height: 2px;
  margin-top: 1px;
  background: repeating-linear-gradient(90deg, #fff 0 2px, transparent 2px 4px);
}

.dlg-tabs {
  height: 24px;
  flex: none;
  display: flex;
  align-items: flex-end;
  padding-left: 3px;
  font-size: 10.500px;
}

.dlg-tab {
  width: 81px;
  height: 23px;
  line-height: 22px;
  text-align: center;
  margin-bottom: -1px;
  position: relative;
  color: #24446f;
  background: #e4edfc;
  border: 1px solid #a9c1df;
  border-bottom: none;
  border-radius: 4px 4px 0 0;
}

.dlg-panel {
  height: 166px;
  flex: none;
  margin-right: 2px;
  padding: 17px 0 0 14px;
  border: 1px solid #a9c1df;
}

.dlg-info {
  height: 18px;
  display: flex;
  align-items: center;
}

.dlg-info span {
  font-size: 11px;
}

.info-code {
  margin: 0 9px 0 56px;
}

.dlg-form {
  display: grid;
  grid-template-columns: 55px 606px;
  grid-template-rows: 18px 18px 62px;
  row-gap: 3px;
  margin-top: 10px;
  align-items: center;
}

.dlg-fld {
  border: 1px solid #c2cee0;
}

.memo {
  height: 62px;
}

.dlg-actions {
  flex: 1;
  display: flex;
  align-items: flex-start;
  padding: 7px 3px 0 2px;
  gap: 0;
}
```
